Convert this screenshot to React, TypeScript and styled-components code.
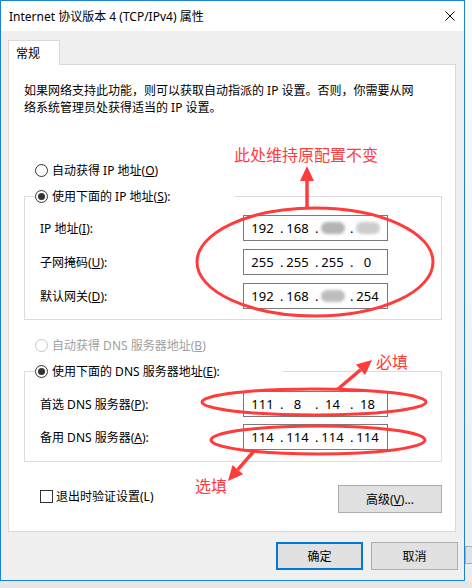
import styled, { createGlobalStyle } from 'styled-components';

const GlobalStyle = createGlobalStyle`
  html, body {
    margin: 0;
    padding: 0;
  }
  body {
    background: #f2f2f2;
    color: #000;
    font-family: "Noto Sans", "Noto Sans CJK SC", sans-serif;
    font-size: 12px;
  }
`;

const Screen = styled.div`
  display: grid;
  grid-template-columns: 465px 7px;
  grid-template-rows: 581px 7px;
  height: 588px;
  overflow: hidden;
  position: relative;
  width: 472px;
`;

const Window = styled.div`
  background: #f0f0f0;
  border: 1px solid #1883d7;
  box-sizing: border-box;
  display: flex;
  flex-direction: column;
`;

const TitleBar = styled.div`
  align-items: center;
  background: #fff;
  display: flex;
  flex: none;
  height: 30px;
  justify-content: space-between;
  padding: 0 9px 0 8px;
`;

const Title = styled.span`
  font-size: 12px;
  white-space: nowrap;
`;

const Body = styled.div`
  display: flex;
  flex: 1;
  flex-direction: column;
  padding-top: 9px;
`;

const TabStrip = styled.div`
  display: flex;
  padding-left: 7px;
`;

const Tab = styled.div`
  align-items: center;
  background: #fff;
  border: 1px solid #d9d9d9;
  border-bottom: none;
  box-sizing: border-box;
  display: flex;
  height: 25px;
  margin-bottom: -1px;
  padding-left: 7px;
  position: relative;
  width: 52px;
  z-index: 1;
`;

const Panel = styled.div`
  background: #fff;
  border: 1px solid #d9d9d9;
  box-sizing: border-box;
  display: flex;
  flex-direction: column;
  height: 468px;
  margin-left: 7px;
  padding: 17px 0 0 15px;
  width: 448px;
`;

const Description = styled.p`
  line-height: 17px;
  margin: 0;
`;

const RadioList = styled.div<{ $top: number }>`
  display: flex;
  flex-direction: column;
  margin-top: ${ props => props.$top }px;
`;

const RadioRow = styled.label<{ $disabled?: boolean }>`
  align-items: center;
  color: ${ props => props.$disabled ? '#a0a0a0' : '#000' };
  display: flex;
  gap: 4px;
  height: 26px;
  padding-left: 11px;
`;

const RadioDot = styled.span<{ $checked?: boolean; $disabled?: boolean }>`
  align-items: center;
  background: #fff;
  border: 1px solid ${ props => props.$disabled ? '#c4c4c4' : '#333' };
  border-radius: 50%;
  box-sizing: border-box;
  display: flex;
  flex: none;
  height: 13px;
  justify-content: center;
  width: 13px;

  &::after {
    background: #333;
    border-radius: 50%;
    content: '';
    display: ${ props => props.$checked ? 'block' : 'none' };
    height: 7px;
    width: 7px;
  }
`;

const GroupBox = styled.fieldset<{ $padTop: number; $gap: number; $padBottom: number }>`
  align-items: center;
  border: 1px solid #dcdcdc;
  box-sizing: border-box;
  display: grid;
  grid-auto-rows: 26px;
  grid-template-columns: 203px 145px;
  margin: 0;
  min-inline-size: 0;
  padding: ${ props => props.$padTop }px 0 ${ props => props.$padBottom }px 15px;
  row-gap: ${ props => props.$gap }px;
  width: 418px;
`;

const GroupLegend = styled.legend<{ $width: number }>`
  align-items: center;
  box-sizing: border-box;
  display: flex;
  gap: 4px;
  height: 26px;
  margin-left: -5px;
  padding: 0;
  width: ${ props => props.$width }px;
`;

const FieldLabel = styled.span`
  white-space: nowrap;
`;

const IpBox = styled.div`
  align-items: center;
  background: #fff;
  border: 1px solid #7a7a7a;
  box-sizing: border-box;
  display: grid;
  font-family: "Noto Sans", sans-serif;
  font-size: 13px;
  grid-template-columns: 31px 4px 31px 4px 31px 4px 31px;
  height: 26px;
  padding-left: 3px;
`;

const Octet = styled.span`
  display: flex;
  justify-content: center;
`;

const Dot = styled.span`
  overflow: visible;
  text-indent: 2px;
  white-space: nowrap;
`;

const Redacted = styled.span<{ $shade: string }>`
  background: ${ props => props.$shade };
  border-radius: 6px;
  display: inline-block;
  filter: blur(1.6px);
  height: 12px;
  width: 24px;
`;

const BottomRow = styled.div`
  align-items: flex-start;
  display: flex;
  justify-content: space-between;
  margin-top: 23px;
  width: 418px;
`;

const CheckRow = styled.label`
  align-items: center;
  display: flex;
  gap: 3px;
  margin: 2px 0 0 16px;
`;

const CheckBox = styled.span`
  background: #fff;
  border: 1px solid #333;
  box-sizing: border-box;
  height: 13px;
  width: 13px;
`;

const Button = styled.button<{ $primary?: boolean; $width: number }>`
  background: #e1e1e1;
  border: ${ props => props.$primary ? '2px solid #0078d7' : '1px solid #adadad' };
  box-sizing: border-box;
  color: #000;
  font-family: "Noto Sans", "Noto Sans CJK SC", sans-serif;
  font-size: 12px;
  height: 28px;
  padding: 0;
  width: ${ props => props.$width }px;
`;

const Footer = styled.div`
  display: flex;
  gap: 8px;
  justify-content: flex-end;
  margin-top: 10px;
  padding-right: 6px;
`;

// a sliver of another window peeking out from behind the dialog
const RightStrip = styled.div`
  background: linear-gradient(#fbfbfb, #ececec);
  display: flex;
  flex-direction: column;
  justify-content: flex-end;
  padding-bottom: 17px;
`;

const BehindButton = styled.div`
  background: #e1e1e1;
  border: 1px solid #adadad;
  border-right: none;
  box-sizing: border-box;
  height: 18px;
`;

const BottomStrip = styled.div`
  background: #e6e6e6;
  grid-column: 1 / span 2;
`;

const Annotations = styled.svg`
  left: 0;
  pointer-events: none;
  position: absolute;
  top: 0;
`;

const Note = styled.text`
  fill: #ff3c3c;
  font-family: "Noto Sans CJK SC", sans-serif;
  font-size: 16px;
`;

type OctetValue = string | { shade: string };

const IP_ROWS: { label: string; key: string; octets: OctetValue[] }[] = [
  { label: 'IP 地址(', key: 'I', octets: ['192', '168', { shade: '#b4b4b4' }, { shade: '#cdcdcd' }] },
  { label: '子网掩码(', key: 'U', octets: ['255', '255', '255', '0'] },
  { label: '默认网关(', key: 'D', octets: ['192', '168', { shade: '#bdbdbd' }, '254'] },
];

const DNS_ROWS: { label: string; key: string; octets: OctetValue[] }[] = [
  { label: '首选 DNS 服务器(', key: 'P', octets: ['111', '8', '14', '18'] },
  { label: '备用 DNS 服务器(', key: 'A', octets: ['114', '114', '114', '114'] },
];

const IpField = ({ octets }: { octets: OctetValue[] }) => (
  <IpBox>
    { octets.map((octet, i) => [
      <Octet key={ `o${ i }` }>
        { typeof octet === 'string' ? octet : <Redacted $shade={ octet.shade } /> }
      </Octet>,
      i < 3 ? <Dot key={ `d${ i }` }>.</Dot> : null,
    ]) }
  </IpBox>
);

const Arrow = ({ x1, y1, x2, y2 }: { x1: number; y1: number; x2: number; y2: number }) => {
  const len = Math.hypot(x2 - x1, y2 - y1);
  const dx = (x2 - x1) / len;
  const dy = (y2 - y1) / len;
  const bx = x2 - dx * 15;
  const by = y2 - dy * 15;
  const px = -dy * 7;
  const py = dx * 7;

  return (
    <g>
      <line x1={ x1 } y1={ y1 } x2={ bx } y2={ by } stroke="#ff3c3c" strokeWidth={ 3.5 } />
      <polygon points={ `${ x2 },${ y2 } ${ bx + px },${ by + py } ${ bx - px },${ by - py }` } fill="#ff3c3c" />
    </g>
  );
};

const App: React.FC = () => {
  return (
    <>
      <GlobalStyle />
      <Screen>
        <Window>
          <TitleBar>
            <Title>Internet 协议版本 4 (TCP/IPv4) 属性</Title>
            <svg width="10" height="10" viewBox="0 0 10 10">
              <path d="M0.5 0.5 L9.5 9.5 M9.5 0.5 L0.5 9.5" stroke="#000" strokeWidth="1" />
            </svg>
          </TitleBar>
          <Body>
            <TabStrip>
              <Tab>常规</Tab>
            </TabStrip>
            <Panel>
              <Description>
                如果网络支持此功能，则可以获取自动指派的 IP 设置。否则，你需要从网<br />
                络系统管理员处获得适当的 IP 设置。
              </Description>

              <RadioList $top={ 41 }>
                <RadioRow>
                  <RadioDot />
                  <span>自动获得 IP 地址(<u>O</u>)</span>
                </RadioRow>
              </RadioList>
              <GroupBox $padTop={ 6 } $gap={ 8 } $padBottom={ 10 }>
                <GroupLegend $width={ 200 }>
                  <RadioDot $checked />
                  <span>使用下面的 IP 地址(<u>S</u>):</span>
                </GroupLegend>
                { IP_ROWS.map((row) => [
                  <FieldLabel key={ `l${ row.key }` }>{ row.label }<u>{ row.key }</u>):</FieldLabel>,
                  <IpField key={ `f${ row.key }` } octets={ row.octets } />,
                ]) }
              </GroupBox>

              <RadioList $top={ 12 }>
                <RadioRow $disabled>
                  <RadioDot $disabled />
                  <span>自动获得 DNS 服务器地址(<u>B</u>)</span>
                </RadioRow>
              </RadioList>
              <GroupBox $padTop={ 7 } $gap={ 7 } $padBottom={ 11 }>
                <GroupLegend $width={ 248 }>
                  <RadioDot $checked />
                  <span>使用下面的 DNS 服务器地址(<u>E</u>):</span>
                </GroupLegend>
                { DNS_ROWS.map((row) => [
                  <FieldLabel key={ `l${ row.key }` }>{ row.label }<u>{ row.key }</u>):</FieldLabel>,
                  <IpField key={ `f${ row.key }` } octets={ row.octets } />,
                ]) }
              </GroupBox>

              <BottomRow>
                <CheckRow>
                  <CheckBox />
                  <span>退出时验证设置(L)</span>
                </CheckRow>
                <Button $width={ 104 }>高级(<u>V</u>)...</Button>
              </BottomRow>
            </Panel>
            <Footer>
              <Button $primary $width={ 87 }>确定</Button>
              <Button $width={ 87 }>取消</Button>
            </Footer>
          </Body>
        </Window>
        <RightStrip>
          <BehindButton />
        </RightStrip>
        <BottomStrip />

        <Annotations width="472" height="588" viewBox="0 0 472 588">
          <ellipse cx="315" cy="262" rx="118" ry="54" fill="none" stroke="#ff3c3c" strokeWidth="3" />
          <ellipse cx="314" cy="402" rx="112" ry="13" fill="none" stroke="#ff3c3c" strokeWidth="3" />
          <ellipse cx="318" cy="440" rx="107" ry="14" fill="none" stroke="#ff3c3c" strokeWidth="3" />
          <Arrow x1={ 307 } y1={ 209 } x2={ 307 } y2={ 166 } />
          <Arrow x1={ 338 } y1={ 389 } x2={ 372 } y2={ 360 } />
          <Arrow x1={ 254 } y1={ 451 } x2={ 228 } y2={ 481 } />
          <Note x="234" y="161">此处维持原配置不变</Note>
          <Note x="376" y="368">必填</Note>
          <Note x="195" y="492">选填</Note>
        </Annotations>
      </Screen>
    </>
  );
};

export default App;
